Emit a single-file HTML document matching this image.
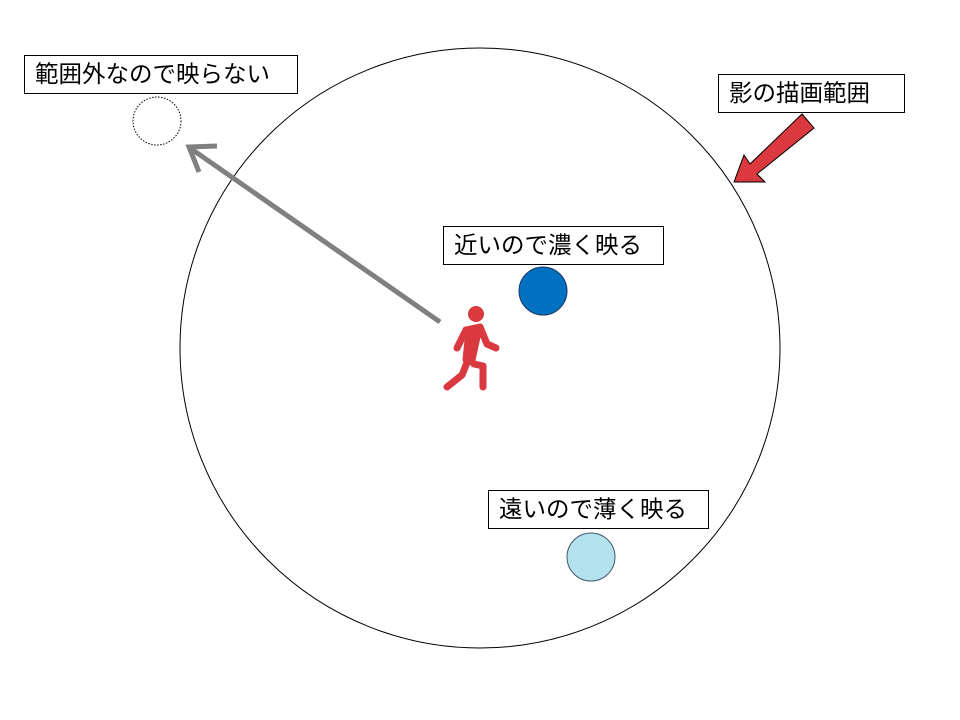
<!DOCTYPE html>
<html><head><meta charset="utf-8"><style>
body{margin:0;width:960px;height:720px;background:#fff;overflow:hidden;position:relative;font-family:"Liberation Sans","Noto Sans CJK JP",sans-serif}
.l{position:absolute;border:1.5px solid #000;background:#fff;font-size:23.5px;line-height:36px;padding-left:10px;box-sizing:border-box;white-space:nowrap}
svg{position:absolute;left:0;top:0}
</style></head><body>
<svg width="960" height="720">
<circle cx="480" cy="348" r="300" fill="none" stroke="#000" stroke-width="1"/>
<circle cx="157" cy="121" r="24" fill="#fff" stroke="#000" stroke-width="1" stroke-dasharray="1.5 1.5"/>
<circle cx="543" cy="291" r="24" fill="#0070c0" stroke="#1f3864" stroke-width="1"/>
<circle cx="591" cy="557" r="24" fill="#b4e1ee" stroke="#40596b" stroke-width="1"/>
<line x1="440" y1="322" x2="190" y2="148" stroke="#808080" stroke-width="5"/>
<polyline points="217,146 189,147 199,172" fill="none" stroke="#808080" stroke-width="5" stroke-linejoin="miter"/>
<polygon points="802,114 814,128 757,174 765,182 734,182 744,155 750,164" fill="#d9393f" stroke="#000" stroke-width="1"/>
<g fill="#d9393f" stroke="#d9393f" stroke-linecap="round" stroke-linejoin="round">
<circle cx="476" cy="314" r="8" stroke="none"/>
<path d="M466 330 L480 327 L487 344 L496 348" fill="none" stroke-width="7"/>
<path d="M466 330 L457 348" fill="none" stroke-width="7"/>
<path d="M468 330 L480 328 L473 360 L465 360 Z" stroke-width="5"/>
<path d="M470 360 L474 364 L483 366 L483 387" fill="none" stroke-width="7"/>
<path d="M468 360 L462 375 L447 387" fill="none" stroke-width="7"/>
</g>
</svg>
<div class="l" style="left:24px;top:55px;width:274px;height:39px">範囲外なので映らない</div>
<div class="l" style="left:718px;top:74px;width:187px;height:39px">影の描画範囲</div>
<div class="l" style="left:443px;top:226px;width:221px;height:39px">近いので濃く映る</div>
<div class="l" style="left:488px;top:490px;width:221px;height:39px">遠いので薄く映る</div>
</body></html>
